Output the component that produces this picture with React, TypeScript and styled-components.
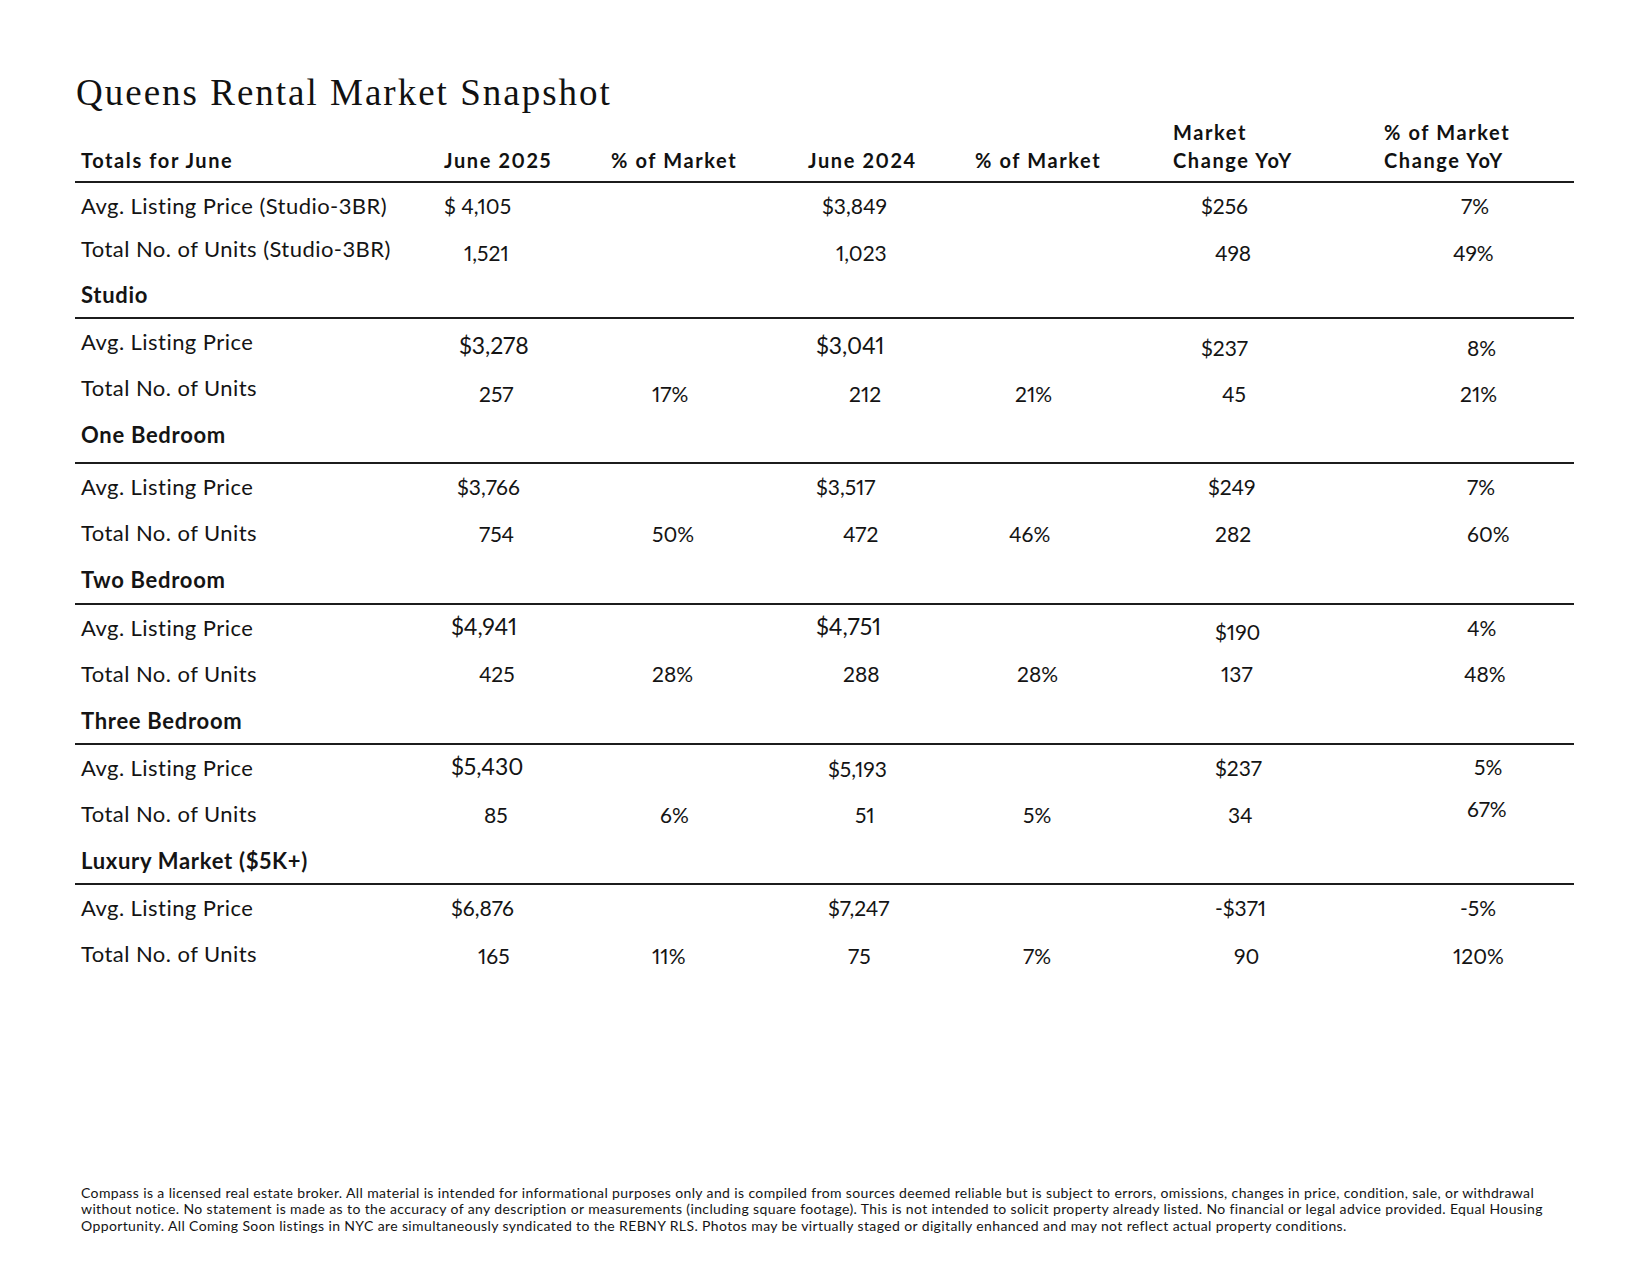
import React from "react";
import styled, { createGlobalStyle } from "styled-components";

const GlobalStyle = createGlobalStyle`
  html, body { margin: 0; padding: 0; background: #ffffff; }
  body {
    font-family: "Lato", "Liberation Sans", sans-serif;
    color: #141414;
    font-variant-numeric: proportional-nums;
  }
  * { box-sizing: border-box; }
`;

const COLS = "369px 167px 197px 167px 198px 211px 190px";

const Page = styled.div`
  width: 1650px;
  height: 1275px;
  padding: 73px 0 0 75px;
  display: flex;
  flex-direction: column;
`;

const Title = styled.h1`
  margin: 0 0 0 1px;
  font-family: "Liberation Serif", "Times New Roman", serif;
  font-weight: 400;
  font-size: 37px;
  line-height: 40px;
  letter-spacing: 2px;
  color: #111;
`;

const Table = styled.div`
  width: 1499px;
  display: flex;
  flex-direction: column;
`;

const HeaderRow = styled.div`
  display: grid;
  grid-template-columns: ${COLS};
  align-items: end;
  padding-top: 5px;
  padding-bottom: 7px;
  border-bottom: 2px solid #1c1c1c;
`;

const HeadCell = styled.div<{ $pad?: number }>`
  font-weight: 700;
  font-size: 20px;
  line-height: 28px;
  letter-spacing: 1.6px;
  color: #111;
  white-space: nowrap;
  padding-left: ${(p) => p.$pad ?? 0}px;
`;

const Group = styled.div`
  border-top: 2px solid #1c1c1c;
  display: flex;
  flex-direction: column;
`;

const Row = styled.div<{ $h: number; $pt?: number }>`
  display: grid;
  grid-template-columns: ${COLS};
  height: ${(p) => p.$h}px;
  padding-top: ${(p) => p.$pt ?? 10}px;
  line-height: 25px;
`;

const Label = styled.div<{ $bold?: boolean }>`
  padding-left: 6px;
  font-size: 22px;
  font-weight: ${(p) => (p.$bold ? 700 : 400)};
  letter-spacing: ${(p) => (p.$bold ? 0.7 : 0.45)}px;
  white-space: nowrap;
`;

const Value = styled.div<{ $x: number; $dy: number; $big?: boolean }>`
  margin-left: ${(p) => p.$x}px;
  margin-top: ${(p) => p.$dy}px;
  font-size: ${(p) => (p.$big ? 23 : 21)}px;
  letter-spacing: ${(p) => (p.$big ? -0.1 : 0)}px;
  white-space: nowrap;
`;

const Footer = styled.div`
  margin-top: 208px;
  margin-left: 6px;
  font-size: 14px;
  line-height: 16.3px;
  letter-spacing: 0.38px;
  color: #141414;
`;

const FootLine = styled.div`
  white-space: nowrap;
`;

type Cell = { t: string; x: number; dy?: number; big?: boolean } | null;
type RowData = { label: string; h: number; dy: number; cells: Cell[] };

const top: RowData[] = [
  {
    label: "Avg. Listing Price (Studio-3BR)",
    h: 43,
    dy: 0,
    cells: [{ t: "$ 4,105", x: 0 }, null, { t: "$3,849", x: 14 }, null, { t: "$256", x: 28 }, { t: "7%", x: 77 }],
  },
  {
    label: "Total No. of Units (Studio-3BR)",
    h: 45,
    dy: 4,
    cells: [{ t: "1,521", x: 20 }, null, { t: "1,023", x: 28 }, null, { t: "498", x: 42 }, { t: "49%", x: 69 }],
  },
];

type GroupData = { rows: RowData[]; section?: string; sectionH?: number };

const groups: GroupData[] = [
  {
    rows: [
      {
        label: "Avg. Listing Price",
        h: 46,
        dy: 4,
        cells: [{ t: "$3,278", x: 15, big: true }, null, { t: "$3,041", x: 8, big: true }, null, { t: "$237", x: 28, dy: 2 }, { t: "8%", x: 83, dy: 2 }],
      },
      {
        label: "Total No. of Units",
        h: 46,
        dy: 6,
        cells: [{ t: "257", x: 35 }, { t: "17%", x: 41 }, { t: "212", x: 41 }, { t: "21%", x: 40 }, { t: "45", x: 49 }, { t: "21%", x: 76 }],
      },
    ],
    section: "One Bedroom",
    sectionH: 51,
  },
  {
    rows: [
      {
        label: "Avg. Listing Price",
        h: 46,
        dy: 0,
        cells: [{ t: "$3,766", x: 13 }, null, { t: "$3,517", x: 8 }, null, { t: "$249", x: 35 }, { t: "7%", x: 83 }],
      },
      {
        label: "Total No. of Units",
        h: 46,
        dy: 1,
        cells: [{ t: "754", x: 35 }, { t: "50%", x: 41 }, { t: "472", x: 35 }, { t: "46%", x: 34 }, { t: "282", x: 42 }, { t: "60%", x: 83 }],
      },
    ],
    section: "Two Bedroom",
    sectionH: 47,
  },
  {
    rows: [
      {
        label: "Avg. Listing Price",
        h: 46,
        dy: -1,
        cells: [{ t: "$4,941", x: 7, big: true, dy: 0 }, null, { t: "$4,751", x: 8, big: true, dy: 0 }, null, { t: "$190", x: 42, dy: 5 }, { t: "4%", x: 83, dy: 1 }],
      },
      {
        label: "Total No. of Units",
        h: 46,
        dy: 0,
        cells: [{ t: "425", x: 35 }, { t: "28%", x: 41 }, { t: "288", x: 35 }, { t: "28%", x: 42 }, { t: "137", x: 48 }, { t: "48%", x: 80 }],
      },
    ],
    section: "Three Bedroom",
    sectionH: 46,
  },
  {
    rows: [
      {
        label: "Avg. Listing Price",
        h: 46,
        dy: 0,
        cells: [{ t: "$5,430", x: 7, big: true, dy: -1 }, null, { t: "$5,193", x: 20, dy: 1 }, null, { t: "$237", x: 42 }, { t: "5%", x: 90, dy: -1 }],
      },
      {
        label: "Total No. of Units",
        h: 46,
        dy: 1,
        cells: [{ t: "85", x: 40 }, { t: "6%", x: 49 }, { t: "51", x: 47 }, { t: "5%", x: 48 }, { t: "34", x: 55 }, { t: "67%", x: 83, dy: -6 }],
      },
    ],
    section: "Luxury Market ($5K+)",
    sectionH: 46,
  },
  {
    rows: [
      {
        label: "Avg. Listing Price",
        h: 46,
        dy: 0,
        cells: [{ t: "$6,876", x: 7 }, null, { t: "$7,247", x: 20 }, null, { t: "-$371", x: 42 }, { t: "-5%", x: 76 }],
      },
      {
        label: "Total No. of Units",
        h: 46,
        dy: 2,
        cells: [{ t: "165", x: 34 }, { t: "11%", x: 41 }, { t: "75", x: 40 }, { t: "7%", x: 48 }, { t: "90", x: 61 }, { t: "120%", x: 69 }],
      },
    ],
  },
];

const DataRow: React.FC<{ row: RowData }> = ({ row }) => (
  <Row $h={row.h}>
    <Label>{row.label}</Label>
    {row.cells.map((c, i) =>
      c ? (
        <Value key={i} $x={c.x} $dy={row.dy + (c.dy ?? 0)} $big={c.big}>
          {c.t}
        </Value>
      ) : (
        <div key={i} />
      )
    )}
  </Row>
);

const SectionRow: React.FC<{ title: string; h: number }> = ({ title, h }) => (
  <Row $h={h} $pt={11}>
    <Label $bold>{title}</Label>
  </Row>
);

export default function App() {
  return (
    <>
      <GlobalStyle />
      <Page>
        <Title>Queens Rental Market Snapshot</Title>
        <Table>
          <HeaderRow>
            <HeadCell $pad={6}>Totals for June</HeadCell>
            <HeadCell>June 2025</HeadCell>
            <HeadCell>% of Market</HeadCell>
            <HeadCell>June 2024</HeadCell>
            <HeadCell>% of Market</HeadCell>
            <HeadCell>
              Market
              <br />
              Change YoY
            </HeadCell>
            <HeadCell>
              % of Market
              <br />
              Change YoY
            </HeadCell>
          </HeaderRow>
          {top.map((r, i) => (
            <DataRow key={i} row={r} />
          ))}
          <SectionRow title="Studio" h={46} />
          {groups.map((g, gi) => (
            <Group key={gi}>
              {g.rows.map((r, ri) => (
                <DataRow key={ri} row={r} />
              ))}
              {g.section && <SectionRow title={g.section} h={g.sectionH ?? 47} />}
            </Group>
          ))}
        </Table>
        <Footer>
          <FootLine>
            Compass is a licensed real estate broker. All material is intended for informational purposes only and is compiled from sources deemed reliable but is subject to errors, omissions, changes in price, condition, sale, or withdrawal
          </FootLine>
          <FootLine>
            without notice. No statement is made as to the accuracy of any description or measurements (including square footage). This is not intended to solicit property already listed. No financial or legal advice provided. Equal Housing
          </FootLine>
          <FootLine>
            Opportunity. All Coming Soon listings in NYC are simultaneously syndicated to the REBNY RLS. Photos may be virtually staged or digitally enhanced and may not reflect actual property conditions.
          </FootLine>
        </Footer>
      </Page>
    </>
  );
}
